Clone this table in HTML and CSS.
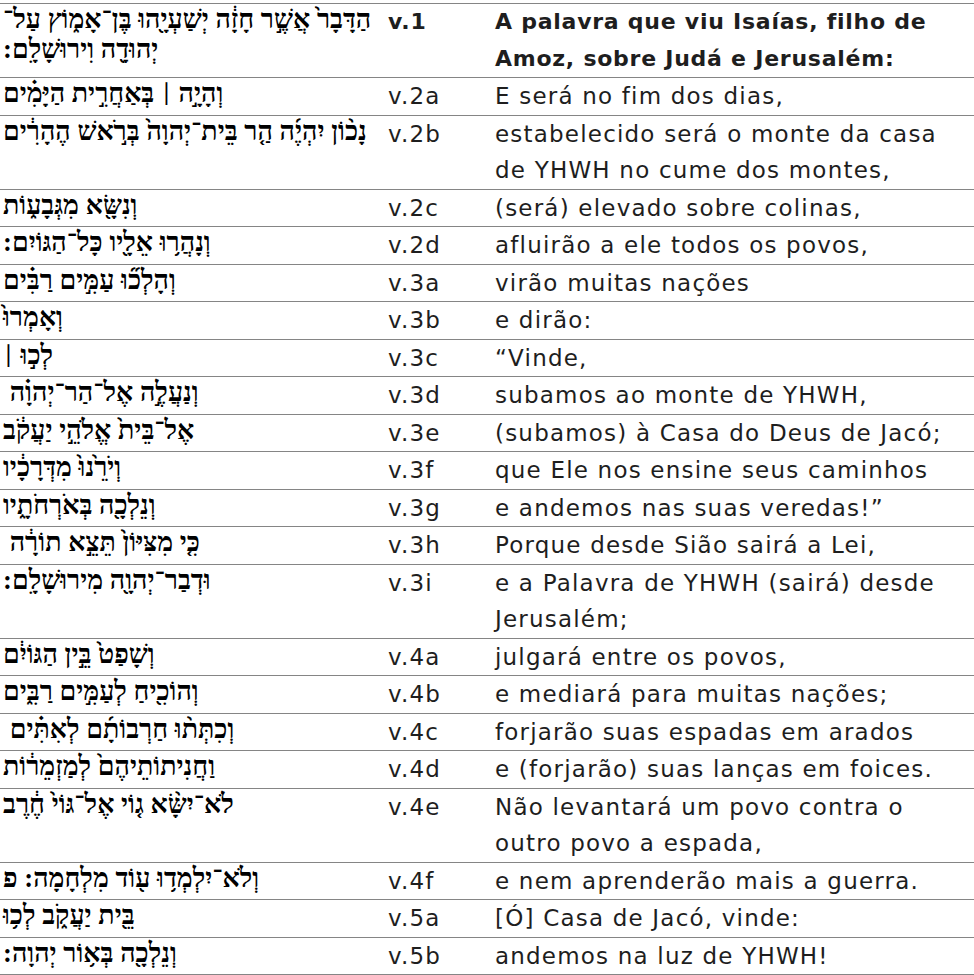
FILE: index.html
```html
<!DOCTYPE html>
<html lang="pt">
<head>
<meta charset="utf-8">
<title>Isaías 2,1-5</title>
<link rel="stylesheet" href="styles.css">
</head>
<body>
<table class="verses">
  <colgroup>
    <col class="c-he">
    <col class="c-vn">
    <col class="c-pt">
  </colgroup>
  <tbody>
    <tr class="head">
      <td class="he" lang="he" dir="rtl">הַדָּבָר֙ אֲשֶׁ֣ר חָזָ֔ה יְשַׁעְיָ֖הוּ בֶּן־אָמ֑וֹץ עַל־<br>יְהוּדָ֖ה וִירוּשָׁלִָם:</td>
      <td class="vn">v.1</td>
      <td class="pt">A palavra que viu Isaías, filho de<br>Amoz, sobre Judá e Jerusalém:</td>
    </tr>
    <tr>
      <td class="he" lang="he" dir="rtl">וְהָיָ֣ה <span class="paseq">׀</span> בְּאַחֲרִ֣ית הַיָּמִ֗ים</td>
      <td class="vn">v.2a</td>
      <td class="pt">E será no fim dos dias,</td>
    </tr>
    <tr>
      <td class="he" lang="he" dir="rtl">נָכ֨וֹן יִהְיֶ֜ה הַ֤ר בֵּית־יְהוָה֙ בְּרֹ֣אשׁ הֶהָרִ֔ים</td>
      <td class="vn">v.2b</td>
      <td class="pt">estabelecido será o monte da casa<br>de YHWH no cume dos montes,</td>
    </tr>
    <tr>
      <td class="he" lang="he" dir="rtl">וְנִשָּׂ֖א מִגְּבָע֑וֹת</td>
      <td class="vn">v.2c</td>
      <td class="pt">(será) elevado sobre colinas,</td>
    </tr>
    <tr>
      <td class="he" lang="he" dir="rtl">וְנָהֲר֥וּ אֵלָ֖יו כָּל־הַגּוֹיִם:</td>
      <td class="vn">v.2d</td>
      <td class="pt">afluirão a ele todos os povos,</td>
    </tr>
    <tr>
      <td class="he" lang="he" dir="rtl">וְהָלְכ֞וּ עַמִּ֣ים רַבִּ֗ים</td>
      <td class="vn">v.3a</td>
      <td class="pt">virão muitas nações</td>
    </tr>
    <tr>
      <td class="he" lang="he" dir="rtl">וְאָמְרוּ֙</td>
      <td class="vn">v.3b</td>
      <td class="pt">e dirão:</td>
    </tr>
    <tr>
      <td class="he" lang="he" dir="rtl">לְכ֣וּ <span class="paseq">׀</span></td>
      <td class="vn">v.3c</td>
      <td class="pt">“Vinde,</td>
    </tr>
    <tr>
      <td class="he" lang="he" dir="rtl">וְנַעֲלֶ֣ה אֶל־הַר־יְהוָ֗ה&nbsp;</td>
      <td class="vn">v.3d</td>
      <td class="pt">subamos ao monte de YHWH,</td>
    </tr>
    <tr>
      <td class="he" lang="he" dir="rtl">אֶל־בֵּית֙ אֱלֹהֵ֣י יַעֲקֹ֔ב</td>
      <td class="vn">v.3e</td>
      <td class="pt">(subamos) à Casa do Deus de Jacó;</td>
    </tr>
    <tr>
      <td class="he" lang="he" dir="rtl">וְיֹרֵ֙נוּ֙ מִדְּרָכָ֔יו</td>
      <td class="vn">v.3f</td>
      <td class="pt">que Ele nos ensine seus caminhos</td>
    </tr>
    <tr>
      <td class="he" lang="he" dir="rtl">וְנֵלְכָ֖ה בְּאֹרְחֹתָ֑יו</td>
      <td class="vn">v.3g</td>
      <td class="pt">e andemos nas suas veredas!”</td>
    </tr>
    <tr>
      <td class="he" lang="he" dir="rtl">כִּ֤י מִצִּיּוֹן֙ תֵּצֵ֣א תוֹרָ֔ה&nbsp;</td>
      <td class="vn">v.3h</td>
      <td class="pt">Porque desde Sião sairá a Lei,</td>
    </tr>
    <tr>
      <td class="he" lang="he" dir="rtl">וּדְבַר־יְהוָ֖ה מִירוּשָׁלִָם:</td>
      <td class="vn">v.3i</td>
      <td class="pt">e a Palavra de YHWH (sairá) desde<br>Jerusalém;</td>
    </tr>
    <tr>
      <td class="he" lang="he" dir="rtl">וְשָׁפַט֙ בֵּ֣ין הַגּוֹיִ֔ם</td>
      <td class="vn">v.4a</td>
      <td class="pt">julgará entre os povos,</td>
    </tr>
    <tr>
      <td class="he" lang="he" dir="rtl">וְהוֹכִ֖יחַ לְעַמִּ֣ים רַבִּ֑ים</td>
      <td class="vn">v.4b</td>
      <td class="pt">e mediará para muitas nações;</td>
    </tr>
    <tr>
      <td class="he" lang="he" dir="rtl">וְכִתְּת֨וּ חַרְבוֹתָ֜ם לְאִתִּ֗ים&nbsp;</td>
      <td class="vn">v.4c</td>
      <td class="pt">forjarão suas espadas em arados</td>
    </tr>
    <tr>
      <td class="he" lang="he" dir="rtl">וַחֲנִיתוֹתֵיהֶם֙ לְמַזְמֵר֔וֹת</td>
      <td class="vn">v.4d</td>
      <td class="pt">e (forjarão) suas lanças em foices.</td>
    </tr>
    <tr>
      <td class="he" lang="he" dir="rtl">לֹא־יִשָּׂ֨א ג֤וֹי אֶל־גּוֹי֙ חֶ֔רֶב</td>
      <td class="vn">v.4e</td>
      <td class="pt">Não levantará um povo contra o<br>outro povo a espada,</td>
    </tr>
    <tr>
      <td class="he" lang="he" dir="rtl">וְלֹא־יִלְמְד֥וּ ע֖וֹד מִלְחָמָה: פ</td>
      <td class="vn">v.4f</td>
      <td class="pt">e nem aprenderão mais a guerra.</td>
    </tr>
    <tr>
      <td class="he" lang="he" dir="rtl">בֵּ֖ית יַעֲקֹ֑ב לְכ֥וּ</td>
      <td class="vn">v.5a</td>
      <td class="pt">[Ó] Casa de Jacó, vinde:</td>
    </tr>
    <tr>
      <td class="he" lang="he" dir="rtl">וְנֵלְכָ֖ה בְּא֥וֹר יְהוָה:</td>
      <td class="vn">v.5b</td>
      <td class="pt">andemos na luz de YHWH!</td>
    </tr>
  </tbody>
</table>
</body>
</html>
```

FILE: styles.css
```css
html, body {
  margin: 0;
  padding: 0;
  background: #ffffff;
}

body {
  padding-top: 3px;
  color: #1e1e1e;
  font-family: "DejaVu Sans", "Liberation Sans", sans-serif;
}

.verses {
  width: 974px;
  border-collapse: collapse;
  table-layout: fixed;
}

.c-he { width: 376px; }
.c-vn { width: 117px; }
.c-pt { width: 481px; }

.verses tr {
  border-top: 1px solid #858585;
}

.verses tr:last-child {
  border-bottom: 1px solid #858585;
}

.verses td {
  padding: 0;
  vertical-align: top;
}

.verses td.he {
  font-family: "Liberation Serif", "DejaVu Sans", serif;
  font-weight: bold;
  font-size: 26.8px;
  line-height: 30px;
  padding-left: 3px;
  text-align: left;
  color: #000000;
  white-space: nowrap;
}

.paseq {
  font-size: 0.72em;
  vertical-align: 0.05em;
}

.vn,
.pt {
  font-size: 23px;
  line-height: 36.5px;
  letter-spacing: 1.2px;
  white-space: nowrap;
}

.verses td.vn {
  padding-left: 12px;
}

.verses td.pt {
  padding-left: 2px;
}

.head .vn,
.head .pt {
  font-weight: bold;
  font-size: 22px;
  letter-spacing: 0.75px;
}
```
